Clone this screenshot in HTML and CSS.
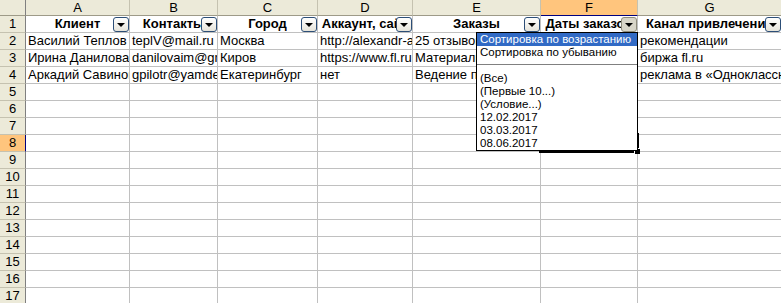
FILE: index.html
```html
<!DOCTYPE html>
<html lang="ru">
<head>
    <meta charset="UTF-8">
    <title>Клиенты</title>
    <link rel="stylesheet" href="styles.css">
</head>
<body>

<div class="sheet">
    <div class="corner"></div>
    <div class="col-head">A</div>
    <div class="col-head">B</div>
    <div class="col-head">C</div>
    <div class="col-head">D</div>
    <div class="col-head">E</div>
    <div class="col-head active">F</div>
    <div class="col-head">G</div>

    <div class="row-head">1</div>
    <div class="cell title">Клиент<span class="filter-btn"></span></div>
    <div class="cell title">Контакты<span class="filter-btn"></span></div>
    <div class="cell title">Город<span class="filter-btn"></span></div>
    <div class="cell title">Аккаунт, сайт<span class="filter-btn"></span></div>
    <div class="cell title">Заказы<span class="filter-btn"></span></div>
    <div class="cell title">Даты заказов<span class="filter-btn open"></span></div>
    <div class="cell title">Канал привлечения<span class="filter-btn"></span></div>

    <div class="row-head">2</div>
    <div class="cell">Василий Теплов</div>
    <div class="cell">teplV@mail.ru</div>
    <div class="cell">Москва</div>
    <div class="cell">http://alexandr-a.ru</div>
    <div class="cell">25 отзывов</div>
    <div class="cell">12.02.2017</div>
    <div class="cell">рекомендации</div>

    <div class="row-head">3</div>
    <div class="cell">Ирина Данилова</div>
    <div class="cell">danilovaim@gmail.com</div>
    <div class="cell">Киров</div>
    <div class="cell">https://www.fl.ru</div>
    <div class="cell">Материалы для сайта</div>
    <div class="cell">03.03.2017</div>
    <div class="cell">биржа fl.ru</div>

    <div class="row-head">4</div>
    <div class="cell">Аркадий Савинов</div>
    <div class="cell">gpilotr@yamdex.ru</div>
    <div class="cell">Екатеринбург</div>
    <div class="cell">нет</div>
    <div class="cell">Ведение проектов</div>
    <div class="cell">08.06.2017</div>
    <div class="cell">реклама в «Одноклассниках»</div>
</div>

<div class="selection"><span class="handle"></span></div>

<div class="filter-list">
    <div class="item selected">Сортировка по возрастанию</div>
    <div class="item">Сортировка по убыванию</div>
    <div class="separator"></div>
    <div class="item">(Все)</div>
    <div class="item">(Первые 10...)</div>
    <div class="item">(Условие...)</div>
    <div class="item">12.02.2017</div>
    <div class="item">03.03.2017</div>
    <div class="item">08.06.2017</div>
</div>

<script>
    // empty rows 5..17
    const sheet = document.querySelector('.sheet');
    for (let r = 5; r <= 17; r++) {
        const head = document.createElement('div');
        head.className = 'row-head' + (r === 8 ? ' active' : '');
        head.textContent = r;
        sheet.appendChild(head);
        for (let c = 0; c < 7; c++) {
            const cell = document.createElement('div');
            cell.className = 'cell';
            sheet.appendChild(cell);
        }
    }
</script>
</body>
</html>
```

FILE: styles.css
```css
body {
    margin: 0;
    background: #fff;
    font-family: "Liberation Sans", Arial, sans-serif;
    overflow: hidden;
}

.sheet {
    display: grid;
    grid-template-columns: 26px 104px 88px 100px 95px 128px 97px 144px;
    grid-template-rows: 16px;
    grid-auto-rows: 17px;
}

.corner, .col-head, .row-head {
    box-sizing: border-box;
    background: #ecead9;
    color: #000;
    font-size: 13px;
    text-align: center;
}

.corner {
    border-right: 1px solid #808080;
    border-bottom: 1px solid #9d9a88;
}

.col-head {
    line-height: 15px;
    border-right: 1px solid #c5c2b0;
    border-bottom: 1px solid #9d9a88;
}

.col-head.active {
    background: #ffc57d;
    border-bottom-color: #000080;
}

.row-head {
    line-height: 16px;
    border-right: 1px solid #808080;
    border-bottom: 1px solid #c5c2b0;
}

.row-head.active {
    background: #ffc57d;
    border-right-color: #000080;
}

.cell {
    position: relative;
    box-sizing: border-box;
    padding: 0 2px;
    border-right: 1px solid #c0c0c0;
    border-bottom: 1px solid #c0c0c0;
    font-size: 13px;
    line-height: 16px;
    white-space: nowrap;
    overflow: hidden;
}

.cell.title {
    font-weight: bold;
    text-align: center;
}

.filter-btn {
    position: absolute;
    top: 1px;
    right: 0;
    width: 16px;
    height: 15px;
    box-sizing: border-box;
    border: 1px solid #2c4e77;
    border-radius: 3px;
    background: linear-gradient(#ffffff, #e6e4da);
}

.filter-btn::after {
    content: "";
    position: absolute;
    left: 3px;
    top: 5px;
    border-left: 4px solid transparent;
    border-right: 4px solid transparent;
    border-top: 4px solid #000;
}

.filter-btn.open {
    border-color: #8f8c7c;
    background: #d8d5c8;
}

.selection {
    position: absolute;
    left: 539px;
    top: 133px;
    width: 100px;
    height: 20px;
    box-sizing: border-box;
    border: 2px solid #000;
}

.handle {
    position: absolute;
    right: -3px;
    bottom: -3px;
    width: 5px;
    height: 5px;
    background: #000;
    border: 1px solid #fff;
    border-width: 1px 0 0 1px;
}

.filter-list {
    position: absolute;
    left: 476px;
    top: 32px;
    width: 162px;
    height: 119px;
    box-sizing: border-box;
    border: 1px solid #000;
    background: #fff;
    font-size: 11.5px;
}

.item {
    height: 13px;
    line-height: 13px;
    padding-left: 3px;
    white-space: nowrap;
}

.item.selected {
    background: #316ac5;
    color: #fff;
}

.separator {
    height: 13px;
    position: relative;
}

.separator::after {
    content: "";
    position: absolute;
    left: 0;
    right: 0;
    top: 5px;
    border-top: 1px solid #808080;
}
```
